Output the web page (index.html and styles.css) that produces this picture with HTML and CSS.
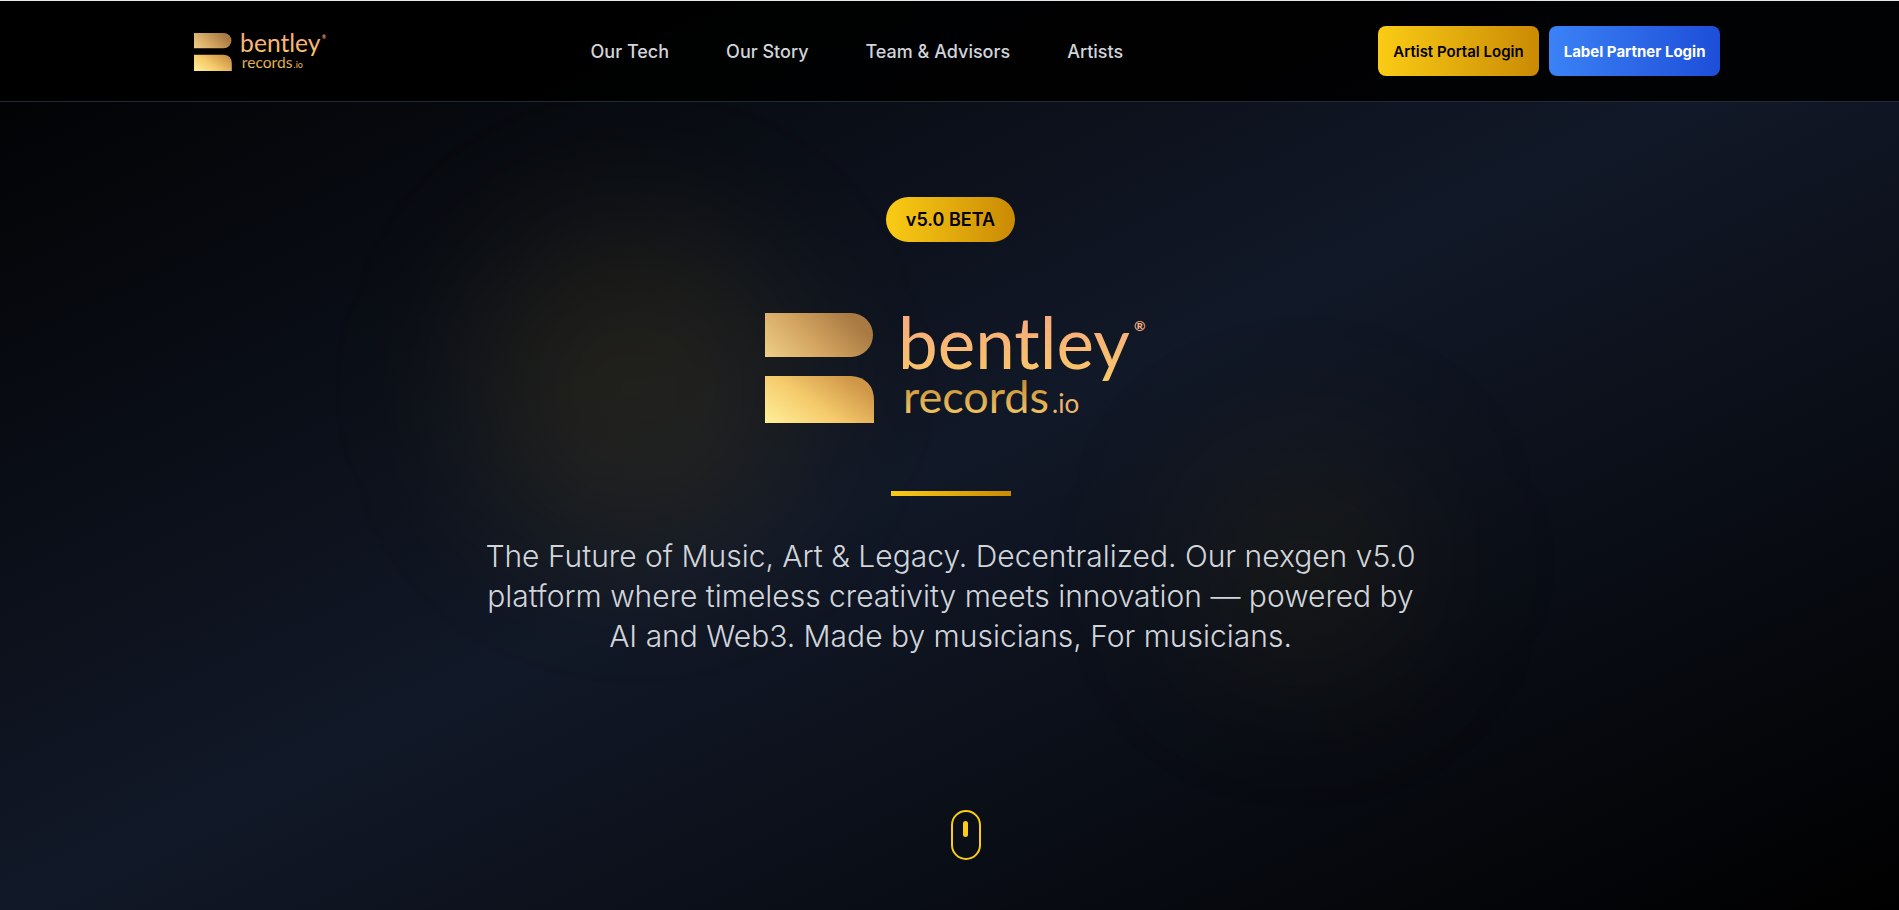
FILE: index.html
```html
<!DOCTYPE html>
<html lang="en">
<head>
<meta charset="utf-8">
<meta name="viewport" content="width=device-width, initial-scale=1">
<title>Bentley Records</title>
<link rel="stylesheet" href="styles.css">
</head>
<body>
<svg class="defs" aria-hidden="true">
  <defs>
    <linearGradient id="mark-top" x1="0" y1="1" x2="1" y2="0.6">
      <stop offset="0" stop-color="#efcf88"/><stop offset="0.5" stop-color="#d3a561"/><stop offset="1" stop-color="#a97a42"/>
    </linearGradient>
    <linearGradient id="mark-bottom" x1="0" y1="1" x2="1" y2="0.4">
      <stop offset="0" stop-color="#fff09a"/><stop offset="0.5" stop-color="#f5cb6c"/><stop offset="1" stop-color="#cf9648"/>
    </linearGradient>
    <linearGradient id="word-main" x1="0" y1="0" x2="0" y2="1">
      <stop offset="0.15" stop-color="#f8a880"/><stop offset="0.95" stop-color="#f8c868"/>
    </linearGradient>
    <linearGradient id="word-sub" x1="0" y1="0" x2="0" y2="1">
      <stop offset="0.15" stop-color="#bf8830"/><stop offset="0.8" stop-color="#efc060"/>
    </linearGradient>
    <symbol id="logo" viewBox="0 0 444 150">
      <path fill="url(#mark-top)" d="M36 23H122A22 22 0 0 1 122 67H36Z"/>
      <path fill="url(#mark-bottom)" d="M36 86H122Q145 88 145 111V133H36Z"/>
      <text class="logo-main" x="169" y="79" fill="url(#word-main)">bentley</text>
      <text class="logo-reg" x="405" y="41" fill="#f8b080">®</text>
      <text class="logo-sub" x="174" y="123" fill="url(#word-sub)">records</text>
      <text class="logo-io" x="323" y="123" fill="#eeb56c">.io</text>
    </symbol>
  </defs>
</svg>
<div class="page">
  <header class="header">
    <div class="header-inner">
      <a href="#" aria-label="Bentley Records home"><svg class="header-logo"><use href="#logo"/></svg></a>
      <nav class="nav">
        <a href="#tech">Our Tech</a>
        <a href="#story">Our Story</a>
        <a href="#team">Team &amp; Advisors</a>
        <a href="#artists">Artists</a>
      </nav>
      <div class="actions">
        <button class="btn btn-gold" type="button">Artist Portal Login</button>
        <button class="btn btn-blue" type="button">Label Partner Login</button>
      </div>
    </div>
  </header>
  <main class="hero">
    <div class="glow glow-left"></div>
    <div class="glow glow-right"></div>
    <span class="badge">v5.0 BETA</span>
    <svg class="hero-logo" role="img" aria-label="Bentley Records"><use href="#logo"/></svg>
    <div class="rule"></div>
    <p class="tagline">The Future of Music, Art &amp; Legacy. Decentralized. Our nexgen v5.0 platform where timeless creativity meets innovation — powered by AI and Web3. Made by musicians, For musicians.</p>
    <div class="scroll-hint"><span class="scroll-dot"></span></div>
  </main>
</div>
</body>
</html>
```
FILE: styles.css
```css
* { box-sizing: border-box; }

body {
  margin: 0;
  background: #000;
  font-family: Inter, "Liberation Sans", sans-serif;
}

.defs { position: absolute; width: 0; height: 0; }

.page {
  position: relative;
  display: flex;
  flex-direction: column;
  min-height: 100vh;
  overflow: hidden;
  padding-left: 2px;
  background: linear-gradient(to bottom right, #000, #111827, #000);
}

.header {
  position: relative;
  z-index: 1;
  margin-left: -2px;
  padding-left: 2px;
  border-top: 1px solid #e5e7eb;
  border-bottom: 1px solid #1f2937;
  background: rgba(0, 0, 0, 0.9);
}

.header-inner {
  display: flex;
  align-items: center;
  justify-content: space-between;
  max-width: 1540px;
  height: 100px;
  margin: 0 auto;
}

.header-logo { display: block; width: 155px; height: 52px; }

.logo-main, .logo-sub, .logo-io, .logo-reg { font-family: Lato, sans-serif; }
.logo-main { font-size: 71px; }
.logo-sub { font-size: 45px; }
.logo-io { font-size: 26px; }
.logo-reg { font-size: 14px; font-weight: 700; }

.nav { display: flex; gap: 57px; }

.nav a {
  color: #d1d5db;
  font-size: 18px;
  font-weight: 500;
  line-height: 25px;
  text-decoration: none;
}

.actions { display: flex; gap: 10px; }

.btn {
  height: 50px;
  padding: 0 15px;
  border: 0;
  border-radius: 8px;
  font-family: inherit;
  font-size: 15px;
  cursor: pointer;
}

.btn-gold {
  background: linear-gradient(to right, #facc15, #ca8a04);
  color: #000;
  font-weight: 600;
}

.btn-blue {
  background: linear-gradient(to right, #3b82f6, #1d4ed8);
  color: #fff;
  font-weight: 700;
}

.hero {
  display: flex;
  flex: 1;
  flex-direction: column;
  align-items: center;
  padding: 95px 0 50px;
}

.badge {
  position: relative;
  padding: 10px 20px;
  border-radius: 23px;
  background: linear-gradient(to right, #facc15, #ca8a04);
  color: #000;
  font-size: 18px;
  font-weight: 600;
  line-height: 25px;
}

.hero-logo {
  position: relative;
  width: 444px;
  height: 150px;
  margin-top: 48px;
}

.rule {
  position: relative;
  width: 120px;
  height: 5px;
  margin-top: 51px;
  background: linear-gradient(to right, #facc15, #ca8a04);
}

.tagline {
  position: relative;
  max-width: 960px;
  margin: 40px 0;
  color: #d1d5db;
  font-size: 30px;
  font-weight: 300;
  line-height: 40px;
  text-align: center;
}

.scroll-hint {
  position: relative;
  display: flex;
  align-self: flex-start;
  justify-content: center;
  width: 30px;
  height: 50px;
  margin-top: auto;
  margin-left: 50%;
  padding-top: 9px;
  border: 2px solid #facc15;
  border-radius: 15px;
}

.scroll-dot {
  width: 5px;
  height: 16px;
  border-radius: 3px;
  background: #facc15;
}

.glow {
  position: absolute;
  border-radius: 50%;
  filter: blur(80px);
}

.glow-left {
  top: 25%;
  left: 25%;
  width: 320px;
  height: 320px;
  background: rgba(250, 204, 21, 0.09);
}

.glow-right {
  right: 25%;
  bottom: 25%;
  width: 240px;
  height: 240px;
  background: rgba(202, 138, 4, 0.07);
}
```
